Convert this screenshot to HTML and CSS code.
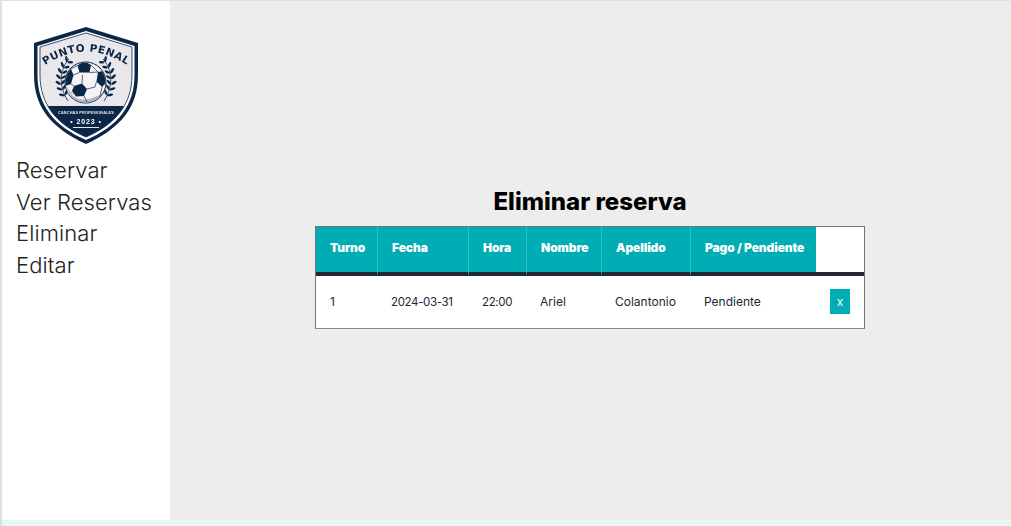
FILE: index.html
```html
<!DOCTYPE html>
<html lang="en">

<head>
    <meta charset="UTF-8">
    <meta name="viewport" content="width=device-width, initial-scale=1.0">
    <title>Eliminar reserva</title>
    <link rel="stylesheet" href="styles.css">
</head>

<body>
    <div class="layout">
        <aside class="sidebar">
            <svg class="logo" viewBox="0 0 106 117" width="106" height="117">
                <defs>
                    <path id="arc" d="M8 41 Q53 8 98 41"></path>
                    <clipPath id="ballClip"><circle cx="52.500" cy="55.500" r="20"></circle></clipPath>
                    <clipPath id="fieldClip"><path d="M53 6 L99 20 L99 48 C99 77 83 97 53 110 C23 97 7 77 7 48 L7 20 Z"></path></clipPath>
                    <g id="leaves">
                        <ellipse cx="-2.600" cy="-1.600" rx="3.100" ry="1.300" transform="rotate(40 -2.600 -1.600)"></ellipse>
                        <ellipse cx="2.400" cy="-1.600" rx="2.800" ry="1.200" transform="rotate(-40 2.400 -1.600)"></ellipse>
                    </g>
                    <g id="laurel" fill="#0b2646">
                        <path d="M36 32 C28 41 24 57 35 74" fill="none" stroke="#0b2646" stroke-width="0.800"></path>
                        <use href="#leaves" transform="translate(34.500 35) rotate(40)"></use>
                        <use href="#leaves" transform="translate(31 40.500) rotate(28)"></use>
                        <use href="#leaves" transform="translate(29 46) rotate(15)"></use>
                        <use href="#leaves" transform="translate(28 51.500) rotate(5)"></use>
                        <use href="#leaves" transform="translate(28 57) rotate(-8)"></use>
                        <use href="#leaves" transform="translate(29.500 62.500) rotate(-20)"></use>
                        <use href="#leaves" transform="translate(32 68) rotate(-30)"></use>
                    </g>
                </defs>
                <path d="M53 0 L105 16 L105 48 C105 80 88 101 53 117 C18 101 1 80 1 48 L1 16 Z" fill="#0b2646"></path>
                <path d="M53 4 L101.500 19 L101.500 48 C101.500 78 85.500 99 53 113 C20.500 99 4.500 78 4.500 48 L4.500 19 Z" fill="#fff"></path>
                <path d="M53 6 L99 20 L99 48 C99 77 83 97 53 110 C23 97 7 77 7 48 L7 20 Z" fill="#e9e7eb" stroke="#0b2646" stroke-width="0.800"></path>
                <rect x="0" y="79" width="106" height="38" fill="#0b2646" clip-path="url(#fieldClip)"></rect>

                <text class="logo-name"><textPath href="#arc" startOffset="50%" text-anchor="middle">PUNTO PENAL</textPath></text>

                <use href="#laurel"></use>
                <use href="#laurel" transform="matrix(-1 0 0 1 106 0)"></use>

                <!-- ball -->
                <circle cx="52.500" cy="55.500" r="20.500" fill="#f4f3f6" stroke="#0b2646" stroke-width="1"></circle>
                <g clip-path="url(#ballClip)">
                    <path d="M33 60 C36 68 42 70 46 72 C54 74 62 70 66 68 L72 66 L66 78 L38 78 Z" fill="#b3b5c0"></path>
                    <path d="M33 58 C35 62 38 65 41 67 L34 70 L31 62 Z" fill="#c6c7cf"></path>
                    <path d="M51 34 L58 38 L56.500 45.500 L46.500 45.500 L44.500 38.500 Z" fill="#0b2646"></path>
                    <path d="M41 59 L49 56.500 L54 62 L51 69 L43 69.500 L39 64 Z" fill="#0b2646"></path>
                    <path d="M65 45 L70 44 L74 55 L69 60 L63.500 54.500 Z" fill="#0b2646"></path>
                    <path d="M38 42 L40.500 48 L38 57 L32 59 L31 46 Z" fill="#0b2646"></path>
                    <path d="M46.500 45.500 L40.500 48 M56.500 45.500 L65 45 M38 57 L41 59 M49 56.500 L49.500 48 M54 62 L62 60 L63.500 54.500 M51 69 L54 75 M69 60 L67 70 M58 38 L65 45 M44.500 38.500 L38 42" stroke="#0b2646" stroke-width="0.700" fill="none"></path>
                </g>

                <text class="logo-sub" x="53" y="87" text-anchor="middle">CANCHAS PROFESIONALES</text>
                <text class="logo-year" x="53" y="96.500" text-anchor="middle">• 2023 •</text>
                <rect x="40" y="100" width="26" height="0.900" fill="#fff"></rect>
            </svg>

            <nav class="menu">
                <a href="#">Reservar</a>
                <a href="#">Ver Reservas</a>
                <a href="#">Eliminar</a>
                <a href="#">Editar</a>
            </nav>
        </aside>

        <main class="content">
            <h2>Eliminar reserva</h2>
            <table class="bookings">
                <thead>
                    <tr>
                        <th class="col-turno">Turno</th>
                        <th class="col-fecha">Fecha</th>
                        <th class="col-hora">Hora</th>
                        <th class="col-nombre">Nombre</th>
                        <th class="col-apellido">Apellido</th>
                        <th class="col-pago">Pago / Pendiente</th>
                        <th class="col-accion"></th>
                    </tr>
                </thead>
                <tbody>
                    <tr>
                        <td>1</td>
                        <td class="num">2024-03-31</td>
                        <td class="num">22:00</td>
                        <td>Ariel</td>
                        <td>Colantonio</td>
                        <td>Pendiente</td>
                        <td class="col-accion"><button type="button">x</button></td>
                    </tr>
                </tbody>
            </table>
        </main>
    </div>
</body>

</html>
```

FILE: styles.css
```css
* {
    margin: 0;
    padding: 0;
    box-sizing: border-box;
}

body {
    height: 100vh;
    overflow: hidden;
    font-family: 'Inter', sans-serif;
    background-color: #e9f5f5;
    border-top: 1px solid #d6e4e7;
    border-left: 2px solid #d6e4e7;
}

.layout {
    display: flex;
    height: 519px;
}

.sidebar {
    width: 168px;
    flex-shrink: 0;
    background: white;
    padding: 26px 0 0 14px;
}

.logo {
    display: block;
    margin-left: 17px;
    filter: blur(0.3px);
}

.logo-name {
    font-family: 'DejaVu Sans', sans-serif;
    font-weight: 700;
    font-size: 10.5px;
    letter-spacing: 0.4px;
    fill: #0b2646;
}

.logo-sub {
    font-family: 'Liberation Sans', sans-serif;
    font-weight: 700;
    font-size: 3.9px;
    letter-spacing: 0.1px;
    fill: #e9e7eb;
}

.logo-year {
    font-family: 'Liberation Sans', sans-serif;
    font-weight: 700;
    font-size: 7px;
    letter-spacing: 0.9px;
    fill: #fff;
}

.menu {
    margin-top: 11px;
}

.menu a {
    display: block;
    font-size: 22px;
    font-weight: 300;
    line-height: 31.5px;
    letter-spacing: 0.1px;
    color: #222;
    text-decoration: none;
}

.content {
    flex: 1;
    background-color: #eeeded;
    display: flex;
    flex-direction: column;
    justify-content: center;
    align-items: center;
    padding: 0 1px 6px 0;
}

h2 {
    font-size: 24px;
    font-weight: 800;
    line-height: 30px;
    color: #000;
    margin-bottom: 9px;
}

.bookings {
    width: 550px;
    table-layout: fixed;
    border-collapse: separate;
    border-spacing: 0;
    background: white;
    border: 1px solid #6f7478;
    border-bottom-color: #8a8a8a;
    font-size: 12px;
}

.bookings th {
    height: 49px;
    padding: 0 0 3px 14px;
    background-color: #00adb5;
    color: white;
    font-size: 12px;
    font-weight: 900;
    letter-spacing: -0.1px;
    text-align: left;
    white-space: nowrap;
    border-left: 1px solid #33bdc4;
    border-bottom: 4px solid #222831;
}

.bookings th:first-child {
    border-left: none;
}

.bookings th.col-accion {
    background: white;
    border-left: none;
}

.bookings td {
    height: 52px;
    padding-left: 14px;
    color: #222831;
    font-weight: 400;
}

.bookings td.num {
    font-size: 11.5px;
    letter-spacing: -0.35px;
}

.col-turno { width: 61px; }
.col-fecha { width: 91px; }
.col-hora { width: 58px; }
.col-nombre { width: 75px; }
.col-apellido { width: 89px; }
.col-pago { width: 126px; }
.col-accion { width: 48px; }

.bookings button {
    display: block;
    width: 20px;
    height: 25px;
    background-color: #00adb5;
    color: white;
    border: none;
    font-family: inherit;
    font-size: 12px;
}
```
